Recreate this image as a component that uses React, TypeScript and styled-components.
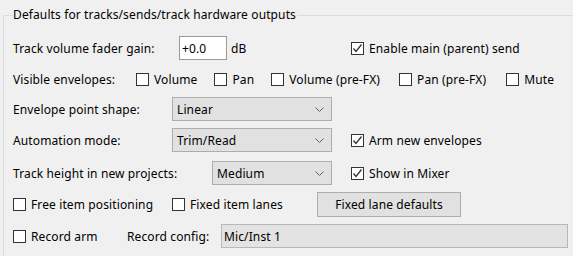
import React from "react";
import styled, { createGlobalStyle } from "styled-components";

const Global = createGlobalStyle`
  html, body { margin: 0; padding: 0; background: #f0f0f0; overflow: hidden; }
  body { font-family: "Segoe UI", "Noto Sans", "Open Sans", sans-serif; font-size: 12px; letter-spacing: 0.12px; color: #000; }
`;

const Page = styled.div`
  width: 573px;
  height: 256px;
  padding-top: 8px;
  box-sizing: border-box;
  overflow: hidden;
`;

const Group = styled.fieldset`
  margin: 0 0 0 3px;
  width: 640px;
  height: 300px;
  box-sizing: border-box;
  border: 1px solid #dcdcdc;
  padding: 0 0 0 9px;
`;

const Legend = styled.legend`
  padding: 0 1px 0 0;
  line-height: 14px;
  margin-left: 0;
`;

const Row = styled.div<{ $top: number; $h?: number }>`
  display: flex;
  align-items: center;
  height: ${(p) => p.$h ?? 24}px;
  margin-top: ${(p) => p.$top}px;
  white-space: nowrap;
`;

const Cell = styled.div<{ $w: number }>`
  width: ${(p) => p.$w}px;
  flex: none;
  display: flex;
  align-items: center;
`;

const Label = styled.span<{ $w?: number }>`
  display: inline-block;
  ${(p) => (p.$w ? `width: ${p.$w}px; flex: none;` : "")}
`;

const TextInput = styled.div<{ $w: number }>`
  width: ${(p) => p.$w}px;
  height: 24px;
  box-sizing: border-box;
  border: 1px solid #9a9a9a;
  background: #fff;
  padding: 0 2px;
  display: flex;
  align-items: center;
  flex: none;
`;

const ReadOnlyInput = styled(TextInput)`
  background: #e3e3e3;
  border-color: #b8b8b8;
`;

const Unit = styled.span`
  margin-left: 4px;
`;

const SelectBox = styled.div<{ $w: number }>`
  width: ${(p) => p.$w}px;
  height: 24px;
  box-sizing: border-box;
  border: 1px solid #adadad;
  background: #e1e1e1;
  display: flex;
  align-items: center;
  padding: 0 7px 0 4px;
  justify-content: space-between;
  flex: none;
`;

const Button = styled.div`
  width: 144px;
  height: 25px;
  box-sizing: border-box;
  border: 1px solid #adadad;
  background: #e1e1e1;
  display: flex;
  align-items: center;
  justify-content: center;
  flex: none;
`;

const CheckRow = styled.label<{ $w?: number; $gap?: number }>`
  display: inline-flex;
  align-items: center;
  flex: none;
  ${(p) => (p.$w ? `width: ${p.$w}px;` : "")}
  margin-right: ${(p) => p.$gap ?? 0}px;
`;

const Box = styled.span`
  width: 13px;
  height: 13px;
  box-sizing: border-box;
  border: 1px solid #333;
  background: #fff;
  margin-right: 5px;
  display: inline-flex;
  align-items: center;
  justify-content: center;
  flex: none;
`;

const Chevron = () => (
  <svg width="9" height="5" viewBox="0 0 9 5">
    <path d="M0.5 0.5 L4.5 4.5 L8.5 0.5" fill="none" stroke="#606060" strokeWidth="1" />
  </svg>
);

const Check = ({ checked, label, w, gap }: { checked?: boolean; label: string; w?: number; gap?: number }) => (
  <CheckRow $w={w} $gap={gap}>
    <Box>
      {checked && (
        <svg width="11" height="11" viewBox="0 0 11 11">
          <path d="M1.5 5.5 L4 8.5 L9.5 1.5" fill="none" stroke="#333" strokeWidth="1.3" />
        </svg>
      )}
    </Box>
    {label}
  </CheckRow>
);

const Select = ({ w, value }: { w: number; value: string }) => (
  <SelectBox $w={w}>
    <span>{value}</span>
    <Chevron />
  </SelectBox>
);

export default function App() {
  return (
    <Page>
      <Global />
      <Group>
        <Legend>Defaults for tracks/sends/track hardware outputs</Legend>
        <Row $top={14}>
          <Cell $w={338}>
            <Label $w={166}>Track volume fader gain:</Label>
            <TextInput $w={48}>+0.0</TextInput>
            <Unit>dB</Unit>
          </Cell>
          <Check checked label="Enable main (parent) send" />
        </Row>
        <Row $top={7}>
          <Label $w={123}>Visible envelopes:</Label>
          <Check label="Volume" gap={17} />
          <Check label="Pan" gap={17} />
          <Check label="Volume (pre-FX)" gap={19} />
          <Check label="Pan (pre-FX)" gap={20} />
          <Check label="Mute" />
        </Row>
        <Row $top={6}>
          <Label $w={159}>Envelope point shape:</Label>
          <Select w={160} value="Linear" />
        </Row>
        <Row $top={7}>
          <Cell $w={338}>
            <Label $w={159}>Automation mode:</Label>
            <Select w={160} value="Trim/Read" />
          </Cell>
          <Check checked label="Arm new envelopes" />
        </Row>
        <Row $top={9}>
          <Cell $w={338}>
            <Label $w={199}>Track height in new projects:</Label>
            <Select w={120} value="Medium" />
          </Cell>
          <Check checked label="Show in Mixer" />
        </Row>
        <Row $top={7} $h={25}>
          <Check label="Free item positioning" w={159} />
          <Check label="Fixed item lanes" w={145} />
          <Button>Fixed lane defaults</Button>
        </Row>
        <Row $top={7}>
          <Check label="Record arm" w={114} />
          <Label $w={94}>Record config:</Label>
          <ReadOnlyInput $w={347}>Mic/Inst 1</ReadOnlyInput>
        </Row>
      </Group>
    </Page>
  );
}
